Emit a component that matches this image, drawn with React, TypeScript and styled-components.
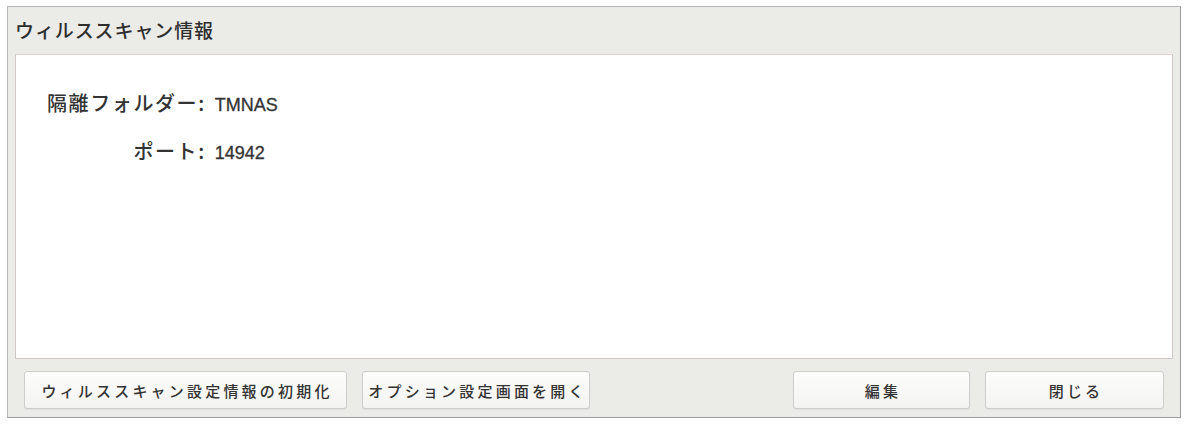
import React from "react";
import styled, { createGlobalStyle } from "styled-components";

const GlobalStyle = createGlobalStyle`
  html, body {
    margin: 0;
    padding: 0;
    background: #ffffff;
  }
  body {
    font-family: "Noto Sans CJK JP", "Noto Sans", sans-serif;
    color: #333333;
  }
`;

const Page = styled.div`
  padding: 6px 6px 0 7px;
`;

const Panel = styled.section`
  width: 1174px;
  height: 412px;
  box-sizing: border-box;
  border: 1px solid #9c9c9c;
  border-top-color: #b4b4b4;
  border-left-color: #b8b8b8;
  background: #ebebe8;
  display: flex;
  flex-direction: column;
`;

const Header = styled.header`
  height: 45px;
  display: flex;
  align-items: center;
  padding: 0 7px 2px 7px;
  font-size: 19px;
  font-weight: 500;
  color: #2e2e2e;
  letter-spacing: 0.9px;
`;

const Body = styled.div`
  flex: 1;
  display: flex;
  flex-direction: column;
  padding: 0 7px 8px;
`;

const InfoBox = styled.div`
  height: 305px;
  box-sizing: border-box;
  background: #ffffff;
  border: 1px solid #cfc8c8;
  border-top-color: #e2d2d2;
  padding: 35px 0 0 31px;
`;

const InfoGrid = styled.dl`
  margin: 0;
  display: grid;
  grid-template-columns: max-content max-content;
  align-items: baseline;
  column-gap: 9px;
  row-gap: 20px;
  font-size: 20px;
  line-height: 25px;
  font-weight: 500;
  color: #333333;
`;

const Label = styled.dt`
  margin: 0;
  text-align: right;
  letter-spacing: 1.6px;
`;

const Value = styled.dd`
  margin: 0;
  font-family: "Liberation Sans", "Noto Sans CJK JP", sans-serif;
  font-size: 18px;
  font-weight: 400;
  -webkit-text-stroke: 0.3px #333333;
`;

const ButtonRow = styled.div`
  display: flex;
  align-items: center;
  gap: 15px;
  padding: 12px 9px 0 9px;
`;

const Spacer = styled.div`
  flex: 1;
`;

const Button = styled.button<{ $width: number }>`
  width: ${(p) => p.$width}px;
  height: 38px;
  box-sizing: border-box;
  border: 1px solid #cdcdcd;
  border-radius: 3px;
  background: linear-gradient(#fdfdfc, #f3f3f1);
  box-shadow: 0 1px 1px rgba(0, 0, 0, 0.06);
  font-family: "Noto Sans CJK JP", sans-serif;
  font-size: 15px;
  font-weight: 500;
  letter-spacing: 3.2px;
  color: #333333;
  padding: 0 0 0 3px;
  display: flex;
  align-items: center;
  justify-content: center;
  cursor: default;
`;

export default function App() {
  return (
    <>
      <GlobalStyle />
      <Page>
        <Panel>
          <Header>ウィルススキャン情報</Header>
          <Body>
            <InfoBox>
              <InfoGrid>
                <Label>隔離フォルダー:</Label>
                <Value>TMNAS</Value>
                <Label>ポート:</Label>
                <Value>14942</Value>
              </InfoGrid>
            </InfoBox>
            <ButtonRow>
              <Button $width={323}>ウィルススキャン設定情報の初期化</Button>
              <Button $width={228}>オプション設定画面を開く</Button>
              <Spacer />
              <Button $width={177}>編集</Button>
              <Button $width={179}>閉じる</Button>
            </ButtonRow>
          </Body>
        </Panel>
      </Page>
    </>
  );
}
